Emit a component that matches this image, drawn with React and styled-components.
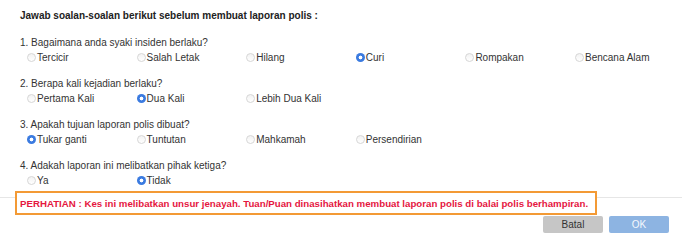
import React from "react"
import styled, { createGlobalStyle } from "styled-components"

const GlobalStyle = createGlobalStyle`
  body {
    margin: 0;
    background: #fff;
    font-family: "Liberation Sans", Arial, sans-serif;
    font-size: 10px;
    color: #333;
  }
`

const Page = styled.div`
  width: 682px;
  height: 244px;
  overflow: hidden;
  padding-top: 9px;
  box-sizing: border-box;
`

const Heading = styled.div`
  padding-left: 20px;
  font-weight: bold;
  color: #222;
  line-height: 14px;
  margin-bottom: 13px;
`

const Form = styled.div`
  display: flex;
  flex-direction: column;
  gap: 12px;
  padding-left: 20px;
`

const Label = styled.div`
  line-height: 14px;
  color: #333;
`

const Options = styled.div`
  display: grid;
  grid-template-columns: repeat(6, 109.6px);
  padding-left: 7px;
  line-height: 15px;
`

const Option = styled.label`
  display: flex;
  align-items: center;
  gap: 1px;
  color: #333;
`

const Dot = styled.span`
  width: 9px;
  height: 9px;
  border-radius: 50%;
  box-sizing: border-box;
  flex: none;
  ${(p) =>
    p.$on
      ? `background: radial-gradient(circle, #fff 0 1.6px, #3b7be0 2.2px);`
      : `border: 1px solid #d6d6d6; background: linear-gradient(#f2f2f2, #fff);`}
`

const Alert = styled.div`
  position: relative;
  z-index: 1;
  margin: 3px 0 -18px 15px;
  width: 582px;
  height: 24px;
  box-sizing: border-box;
  border: 2.5px solid #f39a35;
  background: #fff;
  display: flex;
  align-items: center;
  padding-left: 3px;
  color: #e5173f;
  font-weight: bold;
  font-size: 9.7px;
  white-space: nowrap;
`

const Footer = styled.div`
  border-top: 1px solid #e6e6e6;
  padding: 18px 13px 0 0;
  display: flex;
  justify-content: flex-end;
  gap: 6px;
`

const Button = styled.button`
  width: 60px;
  height: 17px;
  border: none;
  border-radius: 2px;
  font-family: inherit;
  font-size: 10px;
  padding: 0;
  background: ${(p) => (p.$primary ? "#8db4e2" : "#c6c6c6")};
  color: ${(p) => (p.$primary ? "#f4f8fd" : "#333")};
`

const questions = [
  {
    label: "1. Bagaimana anda syaki insiden berlaku?",
    options: ["Tercicir", "Salah Letak", "Hilang", "Curi", "Rompakan", "Bencana Alam"],
    picked: 3,
  },
  {
    label: "2. Berapa kali kejadian berlaku?",
    options: ["Pertama Kali", "Dua Kali", "Lebih Dua Kali"],
    picked: 1,
  },
  {
    label: "3. Apakah tujuan laporan polis dibuat?",
    options: ["Tukar ganti", "Tuntutan", "Mahkamah", "Persendirian"],
    picked: 0,
  },
  {
    label: "4. Adakah laporan ini melibatkan pihak ketiga?",
    options: ["Ya", "Tidak"],
    picked: 1,
  },
]

export default function App() {
  return (
    <Page>
      <GlobalStyle />
      <Heading>Jawab soalan-soalan berikut sebelum membuat laporan polis :</Heading>
      <Form>
        {questions.map((q) => (
          <div key={q.label}>
            <Label>{q.label}</Label>
            <Options>
              {q.options.map((o, i) => (
                <Option key={o}>
                  <Dot $on={i === q.picked} />
                  {o}
                </Option>
              ))}
            </Options>
          </div>
        ))}
      </Form>
      <Alert>
        PERHATIAN : Kes ini melibatkan unsur jenayah. Tuan/Puan dinasihatkan membuat laporan polis di balai polis berhampiran.
      </Alert>
      <Footer>
        <Button>Batal</Button>
        <Button $primary>OK</Button>
      </Footer>
    </Page>
  )
}
